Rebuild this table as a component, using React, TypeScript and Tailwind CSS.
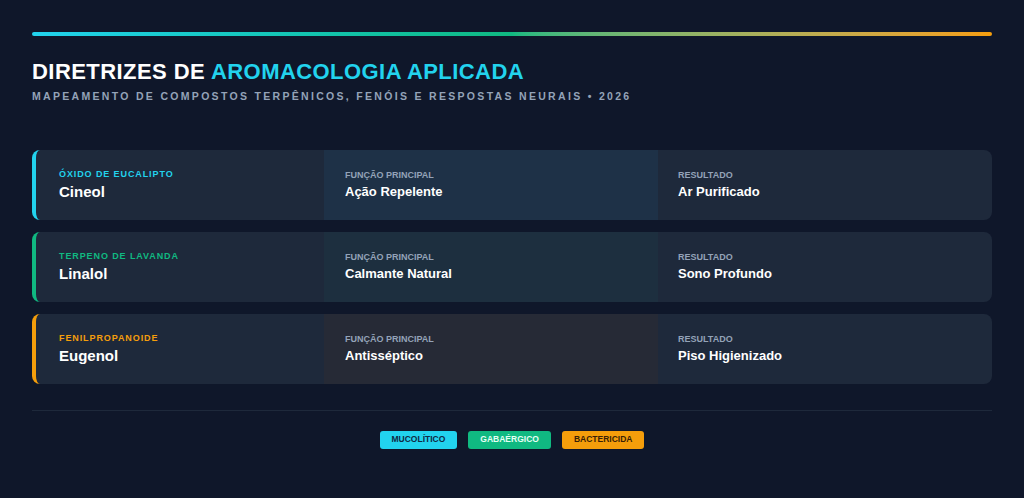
import React from 'react';

const rows = [
  {
    tag: 'Óxido de Eucalipto',
    name: 'Cineol',
    func: 'Ação Repelente',
    result: 'Ar Purificado',
    border: 'border-[#22d3ee]',
    tagColor: 'text-[#22d3ee]',
    mid: 'bg-[#1e3147]',
  },
  {
    tag: 'Terpeno de Lavanda',
    name: 'Linalol',
    func: 'Calmante Natural',
    result: 'Sono Profundo',
    border: 'border-[#10b981]',
    tagColor: 'text-[#10b981]',
    mid: 'bg-[#1d2f3f]',
  },
  {
    tag: 'Fenilpropanoide',
    name: 'Eugenol',
    func: 'Antisséptico',
    result: 'Piso Higienizado',
    border: 'border-[#f59e0b]',
    tagColor: 'text-[#f59e0b]',
    mid: 'bg-[#262a36]',
  },
];

const badges = [
  { label: 'Mucolítico', cls: 'bg-[#22d3ee] text-[#0f2a44]' },
  { label: 'Gabaérgico', cls: 'bg-[#10b981] text-[#e6fff5]' },
  { label: 'Bactericida', cls: 'bg-[#f59e0b] text-[#3a1f05]' },
];

export default function App() {
  return (
    <div className="w-[1024px] h-[498px] bg-[#0f172a] font-['Liberation_Sans',Arial,sans-serif] px-8 pt-8 overflow-hidden">
      <div className="h-1 rounded-full bg-gradient-to-r from-[#22d3ee] via-[#10b981] to-[#f59e0b]" />

      <h1 className="mt-[22px] text-[22px] leading-7 font-bold tracking-[0.02em] text-white">
        DIRETRIZES DE <span className="text-[#22d3ee]">AROMACOLOGIA APLICADA</span>
      </h1>
      <p className="mt-[3px] text-[10.5px] font-bold tracking-[0.22em] text-[#94a3b8] uppercase">
        Mapeamento de compostos terpênicos, fenóis e respostas neurais • 2026
      </p>

      <div className="mt-[45px] flex flex-col gap-3">
        {rows.map((r) => (
          <div
            key={r.name}
            className={`grid grid-cols-[288px_1fr_1fr] h-[70px] rounded-lg overflow-hidden bg-[#1e293b] border-l-4 ${r.border}`}
          >
            <div className="pl-[23px] flex flex-col justify-center">
              <span className={`text-[9px] leading-3 font-bold tracking-[0.1em] uppercase ${r.tagColor}`}>{r.tag}</span>
              <span className="mt-[2px] text-[15px] leading-5 font-bold text-white">{r.name}</span>
            </div>
            <div className={`pl-[21px] flex flex-col justify-center ${r.mid}`}>
              <span className="text-[9px] leading-3 font-bold text-[#94a3b8] uppercase">Função Principal</span>
              <span className="mt-[3px] text-[13px] leading-4 font-bold text-white">{r.func}</span>
            </div>
            <div className="pl-5 flex flex-col justify-center">
              <span className="text-[9px] leading-3 font-bold text-[#94a3b8] uppercase">Resultado</span>
              <span className="mt-[3px] text-[13px] leading-4 font-bold text-white">{r.result}</span>
            </div>
          </div>
        ))}
      </div>

      <div className="mt-[26px] h-px bg-[#1e293b]" />

      <div className="mt-5 flex justify-center gap-[11px]">
        {badges.map((b) => (
          <span
            key={b.label}
            className={`h-[18px] px-[12px] rounded-[3px] flex items-center text-[8.5px] font-bold uppercase ${b.cls}`}
          >
            {b.label}
          </span>
        ))}
      </div>
    </div>
  );
}
